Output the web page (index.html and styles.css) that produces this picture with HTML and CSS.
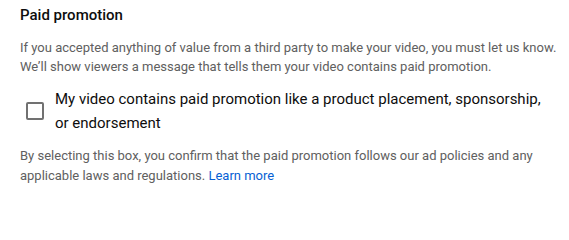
FILE: index.html
```html
<!DOCTYPE html>
<html>
<head>
<meta charset="utf-8">
<link rel="stylesheet" href="styles.css">
</head>
<body>
<section class="section">
  <h2 class="title">Paid promotion</h2>
  <p class="desc">If you accepted anything of value from a third party to make your video, you must let us know. We’ll show viewers a message that tells them your video contains paid promotion.</p>
  <label class="check-row">
    <span class="box"></span>
    <span class="label">My video contains paid promotion like a product placement, sponsorship, or endorsement</span>
  </label>
  <p class="note">By selecting this box, you confirm that the paid promotion follows our ad policies and any applicable laws and regulations. <a class="link" href="#">Learn more</a></p>
</section>
</body>
</html>
```
FILE: styles.css
```css
html, body {
  margin: 0;
  padding: 0;
  background: #ffffff;
}
body {
  font-family: Roboto, "Noto Sans", Arial, sans-serif;
  color: #0d0d0d;
}
.section {
  padding: 5px 12px 0 20px;
}
.title {
  margin: 0;
  font-size: 15px;
  font-weight: 500;
  line-height: 20px;
  color: #0d0d0d;
}
.desc {
  margin: 13px 0 0;
  font-size: 13px;
  line-height: 19px;
  color: #606060;
}
.check-row {
  display: flex;
  align-items: center;
  margin-top: 11px;
  padding-left: 6px;
}
.box {
  flex: none;
  width: 14px;
  height: 14px;
  border: 2px solid #717171;
  border-radius: 2px;
}
.label {
  margin-left: 11px;
  font-size: 15px;
  line-height: 24px;
  color: #0d0d0d;
}
.note {
  margin: 11px 0 0;
  font-size: 13px;
  line-height: 20px;
  color: #606060;
}
.link {
  color: #065fd4;
  text-decoration: none;
}
```
